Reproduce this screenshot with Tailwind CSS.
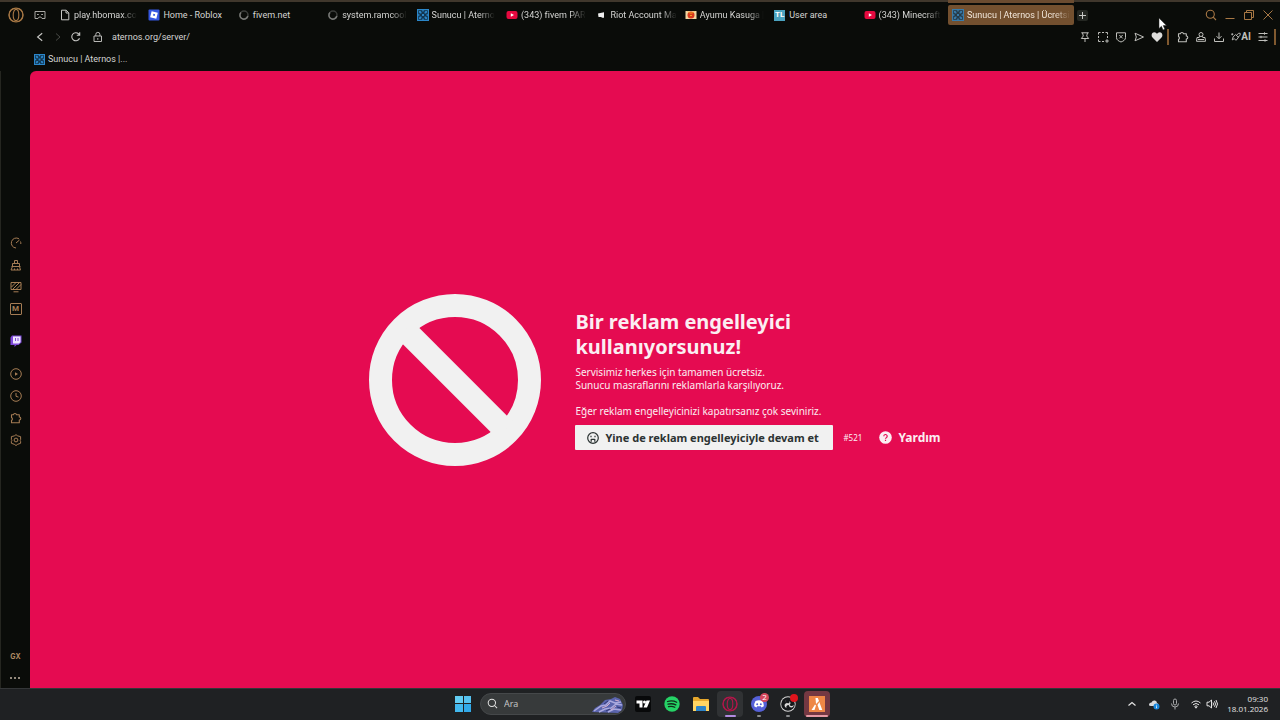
<!DOCTYPE html>
<html lang="tr">
<head>
<meta charset="utf-8">
<meta name="viewport" content="width=device-width, initial-scale=1">
<title>Sunucu | Aternos | Ücretsiz Minecraft sunucusu</title>
<script src="https://cdn.jsdelivr.net/npm/@tailwindcss/browser@4"></script>
</head>
<body class="flex h-screen flex-col overflow-hidden bg-[#0a0c09] font-['Roboto',sans-serif] text-[9px] leading-3 text-[#d5d5d3]">

<svg class="hidden" aria-hidden="true">
  <symbol id="aternos" viewBox="0 0 12 12"><rect width="12" height="12" fill="#2b86c8"/><rect x="1.200" y="1.200" width="9.600" height="9.600" fill="#12354f"/><path d="M2 2h1.500l1 1v1.500H3l-1-1zM10 2H8.500l-1 1v1.500H9l1-1zM2 10h1.500l1-1V7.500H3l-1 1zM10 10H8.500l-1-1V7.500H9l1 1zM5 5h2v2H5zM5.300 1h1.400v1.500H5.300zM5.300 9.500h1.400V11H5.300zM1 5.300h1.500v1.400H1zM9.500 5.300H11v1.400H9.500z" fill="#2b86c8"/></symbol>
  <symbol id="youtube" viewBox="0 0 12 12"><rect x=".5" y="2" width="11" height="8" rx="2" fill="#e5093f"/><path d="M4.800 4.200v3.600L8 6z" fill="#fff"/></symbol>
  <symbol id="loading" viewBox="0 0 12 12"><circle cx="6" cy="6" r="4" fill="none" stroke="#3c3e3b" stroke-width="1.500"/><path d="M3 3.400A4 4 0 1 0 9.800 7" fill="none" stroke="#777875" stroke-width="1.500"/></symbol>
  <symbol id="puzzle" viewBox="0 0 12 12"><path d="M1.500 2.800H3.300a1.700 1.700 0 0 1 3.300 0H9.300V5a1.500 1.500 0 0 1 0 3v2.700H1.500V8.500a1.700 1.700 0 0 0 0-3z" fill="none" stroke="currentColor" stroke-width="1.100" stroke-linejoin="round"/></symbol>
  <symbol id="opera" viewBox="0 0 16 16"><g fill="none" stroke="currentColor" stroke-width="1.100"><circle cx="8" cy="8" r="6.900"/><ellipse cx="8" cy="8" rx="2.800" ry="5.600"/><path d="M6.300 1.500a5.300 6.500 0 0 0 0 13M9.700 1.500a5.300 6.500 0 0 1 0 13"/></g></symbol>
  <symbol id="search" viewBox="0 0 12 12"><g fill="none" stroke="currentColor" stroke-width="1.100"><circle cx="5.300" cy="5.300" r="4"/><path d="m8.200 8.200 2.800 2.800"/></g></symbol>
</svg>

<header class="relative shrink-0 border-t-2 border-[#40372c] pt-px">
  <div class="flex h-6 items-center">
    <button class="ml-2 size-4 text-[#a87845]" aria-label="Opera menüsü"><svg class="size-4"><use href="#opera"/></svg></button>
    <button class="ml-[10px] size-3" aria-label="Çalışma alanı"><svg class="size-3" viewBox="0 0 12 12" fill="none" stroke="#aaa9a5"><path d="M1 2.500h10v7H8L6.800 8H5.200L4 9.500H1z"/><path d="M3 5.500h1.800M7.200 5.500H9"/></svg></button>
    <nav class="ml-[9px] grid w-[894px] shrink grid-cols-10" aria-label="Sekmeler">
      <a href="#" class="flex h-5 min-w-0 items-center gap-[3px] pl-1"><svg class="size-3 shrink-0" viewBox="0 0 12 12" fill="none" stroke="#c8c8c5"><path d="M2.500 1.200h4.700l2.600 2.600v7H2.500zM7 1.500V4h2.500"/></svg><span class="whitespace-nowrap [mask-image:linear-gradient(to_right,black_75%,transparent)]">play.hbomax.co</span></a>
      <a href="#" class="flex h-5 min-w-0 items-center gap-[3px] pl-1"><svg class="size-3 shrink-0" viewBox="0 0 12 12"><rect x=".5" y=".5" width="11" height="11" rx="1" fill="#3556e0"/><path d="m3.600 2.200 6.200 1.600-1.500 6-6.200-1.600z" fill="#fff"/><path d="m5.400 4.800 1.700.4-.4 1.700L5 6.500z" fill="#3556e0"/></svg><span class="whitespace-nowrap">Home - Roblox</span></a>
      <a href="#" class="flex h-5 min-w-0 items-center gap-[3px] pl-1"><svg class="size-3 shrink-0"><use href="#loading"/></svg><span>fivem.net</span></a>
      <a href="#" class="flex h-5 min-w-0 items-center gap-[3px] pl-1"><svg class="size-3 shrink-0"><use href="#loading"/></svg><span class="whitespace-nowrap [mask-image:linear-gradient(to_right,black_75%,transparent)]">system.ramcool</span></a>
      <a href="#" class="flex h-5 min-w-0 items-center gap-[3px] pl-1"><svg class="size-3 shrink-0"><use href="#aternos"/></svg><span class="whitespace-nowrap [mask-image:linear-gradient(to_right,black_75%,transparent)]">Sunucu | Aterno</span></a>
      <a href="#" class="flex h-5 min-w-0 items-center gap-[3px] pl-1"><svg class="size-3 shrink-0"><use href="#youtube"/></svg><span class="whitespace-nowrap [mask-image:linear-gradient(to_right,black_75%,transparent)]">(343) fivem PAR</span></a>
      <a href="#" class="flex h-5 min-w-0 items-center gap-[3px] pl-1"><svg class="size-3 shrink-0" viewBox="0 0 12 12"><path d="M3 4.500 9 3.300v5.500H7.300L6 8H3.500z" fill="#eee"/></svg><span class="whitespace-nowrap [mask-image:linear-gradient(to_right,black_75%,transparent)]">Riot Account Ma</span></a>
      <a href="#" class="flex h-5 min-w-0 items-center gap-[3px] pl-1"><svg class="size-3 shrink-0" viewBox="0 0 12 12"><rect x=".5" y="2" width="11" height="8" fill="#f2d5a0"/><circle cx="6" cy="6" r="3.500" fill="#d8381c"/><path d="M3 2.500 4.500 4h3L9 2.500M5 6.500h2" stroke="#f0a020" fill="none"/></svg><span class="whitespace-nowrap [mask-image:linear-gradient(to_right,black_75%,transparent)]">Ayumu Kasuga |</span></a>
      <a href="#" class="flex h-5 min-w-0 items-center gap-[3px] pl-1"><span class="grid size-[11px] shrink-0 place-items-center bg-[#4ba3c0] text-[8px] font-bold leading-none text-white">TL</span><span class="ml-px whitespace-nowrap">User area</span></a>
      <a href="#" class="flex h-5 min-w-0 items-center gap-[3px] pl-1"><svg class="size-3 shrink-0"><use href="#youtube"/></svg><span class="whitespace-nowrap [mask-image:linear-gradient(to_right,black_75%,transparent)]">(343) Minecraft</span></a>
    </nav>
    <a href="#" aria-current="page" class="relative -ml-px flex h-5 w-[126px] shrink-0 items-center gap-[3px] rounded-xs bg-[#73502f] pl-1 text-[#f1e6da]"><span class="absolute inset-x-0 -top-[5px] h-[3px] bg-[#6a4b30]"></span><svg class="size-3 shrink-0 opacity-80"><use href="#aternos"/></svg><span class="whitespace-nowrap [mask-image:linear-gradient(to_right,black_85%,transparent)]">Sunucu | Aternos | Ücretsi</span></a>
    <button class="ml-[3px] grid size-[11px] place-items-center rounded-xs bg-[#242722]" aria-label="Yeni sekme"><svg class="size-[9px]" viewBox="0 0 9 9" stroke="#c8c8c5"><path d="M4.500 1v7M1 4.500h7"/></svg></button>
    <div class="ml-auto mr-[6px] flex items-center gap-[7px] text-[#a87845]">
      <button class="size-3" aria-label="Sekmelerde ara"><svg class="size-3"><use href="#search"/></svg></button>
      <button class="size-3" aria-label="Küçült"><svg class="size-3" viewBox="0 0 12 12" stroke="currentColor"><path d="M1.500 9.500h9"/></svg></button>
      <button class="size-3" aria-label="Geri yükle"><svg class="size-3" viewBox="0 0 12 12" fill="none" stroke="currentColor"><path d="M1.500 3.500h7v7h-7zM3.500 3.500v-2h7v7h-2"/></svg></button>
      <button class="size-3" aria-label="Kapat"><svg class="size-3" viewBox="0 0 12 12" stroke="currentColor"><path d="m1.500 1.500 9 9m0-9-9 9"/></svg></button>
    </div>
  </div>

  <div class="flex h-5 items-center pl-[34px]">
    <button class="size-3" aria-label="Geri"><svg class="size-3" viewBox="0 0 12 12" fill="none" stroke="#c8c8c5" stroke-width="1.100"><path d="m8.200 2.300-4.600 3.700 4.600 3.700"/></svg></button>
    <button class="ml-[6px] size-3" aria-label="İleri" disabled><svg class="size-3" viewBox="0 0 12 12" fill="none" stroke="#484a46"><path d="m4 2.500 4 3.500-4 3.500"/></svg></button>
    <button class="ml-[6px] size-3" aria-label="Yenile"><svg class="size-3" viewBox="0 0 12 12" fill="none" stroke="#c8c8c5" stroke-width="1.100"><path d="M9.500 7.200A4 4 0 1 1 8.700 3L9.500 4M9.700 1.200v3H6.800"/></svg></button>
    <button class="ml-[10px] size-3" aria-label="Site bilgileri"><svg class="size-3" viewBox="0 0 12 12" fill="none" stroke="#b8b8b5"><path d="M2 5h7.500v5.500H2zM3.800 5V3.400a2 2 0 0 1 4.100 0V5M5.800 7v1.800"/></svg></button>
    <input class="ml-2 w-0 grow bg-transparent text-[9px] leading-3 outline-none" aria-label="Adres" value="aternos.org/server/">
    <div class="mr-1 flex items-center gap-[6px] text-[#c0c0bc]">
      <button class="size-3" aria-label="Sabitle"><svg class="size-3" viewBox="0 0 12 12" fill="none" stroke="currentColor"><path d="M2.300 1.800h7.400M3.500 1.800 4.300 5 2.300 7.500h7.400L7.700 5l.8-3.200M6 7.500V11"/></svg></button>
      <button class="size-3" aria-label="Anlık görüntü"><svg class="size-3" viewBox="0 0 12 12" fill="none" stroke="currentColor"><path d="M1.500 3.500v-2h2M5 1.500h2M8.500 1.500h2v2M10.500 5v2M1.500 5v2M1.500 8.500v2h2M5 10.500h2M10 8.200v3.600M8.200 10h3.600"/></svg></button>
      <button class="size-3" aria-label="Reklam engelleyici"><svg class="size-3" viewBox="0 0 12 12" fill="none" stroke="currentColor"><path d="M1.500 1.800h9V6.500c0 2.500-2 3.500-4.500 4.500-2.500-1-4.500-2-4.500-4.500zM4.300 4l3.400 3.400M7.700 4 4.300 7.400"/></svg></button>
      <button class="size-3" aria-label="Flow"><svg class="size-3" viewBox="0 0 12 12" fill="none" stroke="currentColor"><path d="M2 2.200 10.500 6 2 9.800 3.300 6z" stroke-linejoin="round"/></svg></button>
      <button class="size-3" aria-label="Favorilere ekle"><svg class="size-3" viewBox="0 0 12 12"><path d="M6 11 1.500 6.500C-.5 4 1.200 1.300 3.300 1.300 4.500 1.300 5.500 2 6 3c.5-1 1.500-1.700 2.700-1.700 2.100 0 3.800 2.700 1.800 5.200z" fill="#dededb"/></svg></button>
      <span class="-mx-[2px] h-4 w-[2px] bg-[#80592f]"></span>
      <button class="ml-1 size-3" aria-label="Uzantılar"><svg class="size-3"><use href="#puzzle"/></svg></button>
      <button class="size-3" aria-label="Profil"><svg class="size-3" viewBox="0 0 12 12" fill="none" stroke="currentColor"><circle cx="6" cy="3.500" r="2"/><path d="M4.500 5.200 4.200 6.500H2L1.500 10.300h9L10 6.500H7.800L7.500 5.200M3 8.500h6"/></svg></button>
      <button class="size-3" aria-label="İndirilenler"><svg class="size-3" viewBox="0 0 12 12" fill="none" stroke="currentColor"><path d="M6 1.500v6M3.500 5.200 6 7.700l2.500-2.500M1.500 7.500v3h9v-3"/></svg></button>
      <button class="flex h-3 items-center text-[10px] font-bold leading-3" aria-label="Opera AI"><svg class="size-[10px]" viewBox="0 0 12 12" fill="none" stroke="currentColor" stroke-width="1.100"><path d="M5.500 3 9 6.500 6 10 4 8 1.500 9.500 2.500 6zM6.500 4.200 9 1.500h2V4L8 6.500M1.500 4V1.500M.3 2.700h2.500"/></svg>AI</button>
      <button class="size-3" aria-label="Kolay kurulum"><svg class="size-3" viewBox="0 0 12 12" fill="none" stroke="currentColor"><path d="M1.500 2.500h9M1.500 6h9M1.500 9.500h9M7.500 1.300v2.400M4 4.800v2.400M8 8.300v2.400"/></svg></button>
      <span class="-ml-px h-4 w-[2px] bg-[#80592f]"></span>
    </div>
  </div>

  <nav class="flex h-6 items-center pl-[34px]" aria-label="Yer imleri">
    <a href="#" class="flex items-center gap-[3px]"><svg class="size-[11px]"><use href="#aternos"/></svg>Sunucu | Aternos |...</a>
  </nav>
  <svg class="absolute left-[1158px] top-[15px] h-[14px] w-[9px]" viewBox="0 0 9 14" aria-hidden="true"><path d="M1 1v10.500l2.400-2.200 1.700 3.600 1.700-.8-1.600-3.500H8.500z" fill="#fff" stroke="#222" stroke-width=".5"/></svg>
</header>

<div class="flex min-h-0 grow">
  <aside class="flex w-[30px] shrink-0 flex-col items-center border-l border-[#252620] pt-[166px] text-[#a57c54]">
    <div class="flex flex-col gap-[10px]">
      <button class="size-3" aria-label="GX Control"><svg class="size-3" viewBox="0 0 12 12" fill="none" stroke="currentColor"><path d="M9 1.800A5 5 0 1 0 6 11M6 6l3.500-3M10.500 4.500a5 5 0 0 1 .3 2.500"/></svg></button>
      <button class="size-3" aria-label="GX Cleaner"><svg class="size-3" viewBox="0 0 12 12" fill="none" stroke="currentColor"><path d="M4.500 4.500V1.500h3v3M2.500 7.500v-3h7v3M1.500 7.500h9M2.500 7.500 1 11h9.500L9.500 7.500M4.500 11V9.500M7.500 11V9.500"/></svg></button>
      <button class="size-3" aria-label="Duvar kağıdı"><svg class="size-3" viewBox="0 0 12 12" fill="none" stroke="currentColor"><path d="M1 1.500h10v7H1zM1.500 6 6 1.500M2.500 8.500l7-7M6 8.500 11 3.500M3.500 10.800h5"/></svg></button>
      <button class="grid size-3 place-items-center rounded-[1px] border border-current text-[8px] font-bold leading-none" aria-label="Modlar">M</button>
    </div>
    <button class="mt-[20px] size-3" aria-label="Twitch"><svg class="size-3" viewBox="0 0 12 12"><path d="M2 .5h9.500v7L8.500 10H6.500L4.500 12v-2H.5V2.500z" fill="#7d48d8"/><path d="M3 1.500h7.500V7L9 8.500H3z" fill="#eee5ff"/><path d="M5.500 3v3M8 3v3" stroke="#7d48d8"/></svg></button>
    <div class="mt-[21px] flex flex-col gap-[10px]">
      <button class="size-3" aria-label="Oynatıcı"><svg class="size-3" viewBox="0 0 12 12" fill="none" stroke="currentColor"><circle cx="6" cy="6" r="5.300"/><path d="M5 4.200v3.600L8 6z" fill="currentColor" stroke="none"/></svg></button>
      <button class="size-3" aria-label="Geçmiş"><svg class="size-3" viewBox="0 0 12 12" fill="none" stroke="currentColor"><circle cx="6" cy="6" r="5.300"/><path d="M6 3v3.300l2.500.8"/></svg></button>
      <button class="size-3" aria-label="Uzantılar"><svg class="size-3"><use href="#puzzle"/></svg></button>
      <button class="size-3" aria-label="Ayarlar"><svg class="size-3" viewBox="0 0 12 12" fill="none" stroke="currentColor"><path d="m6 .7 1.700 1.200 2.900.7v3.100l-.4.8.4.8v2l-2.900 1L6 11.500l-1.700-1.200-2.900-1v-2l.4-.8-.4-.8V2.600l2.900-.7z"/><circle cx="6" cy="6" r="1.900"/></svg></button>
    </div>
    <div class="mb-[6px] mt-auto flex flex-col items-center gap-3">
      <button class="font-['Inter',sans-serif] text-[7px] font-bold leading-[10px] text-[#b08b63]">GX</button>
      <button class="flex h-2 items-center gap-[2px]" aria-label="Diğer"><i class="size-[2px] rounded-full bg-[#c3b5a5]"></i><i class="size-[2px] rounded-full bg-[#c3b5a5]"></i><i class="size-[2px] rounded-full bg-[#c3b5a5]"></i></button>
    </div>
  </aside>

  <main class="flex grow items-center justify-center rounded-tl-md bg-[#e50b51] font-['Noto_Sans',sans-serif] text-[#fbeef2]">
    <div class="flex items-center gap-[34px]">
      <svg class="size-[172px] shrink-0" viewBox="0 0 172 172" fill="none" stroke="#f1f1f1" role="img" aria-label="Yasak"><circle cx="86" cy="86" r="74.500" stroke-width="23"/><path d="m36 36 100 100" stroke-width="23"/></svg>
      <div>
        <h1 class="text-[20px] font-bold leading-[25px]">Bir reklam engelleyici<br>kullanıyorsunuz!</h1>
        <p class="mt-[7px] text-[10px] leading-[13px]">Servisimiz herkes için tamamen ücretsiz.<br>Sunucu masraflarını reklamlarla karşılıyoruz.<br><br>Eğer reklam engelleyicinizi kapatırsanız çok seviniriz.</p>
        <div class="mt-[7px] flex items-center">
          <button class="flex h-[25px] w-[258px] items-center gap-[6px] whitespace-nowrap rounded-[1px] bg-[#f1f1f1] pl-3 text-[11px] font-bold text-[#2c3333]"><svg class="size-3 shrink-0" viewBox="0 0 12 12" fill="none" stroke="currentColor" stroke-width="1.200"><circle cx="6" cy="6" r="5.300"/><path d="M4 3.800v1.500M8 3.800v1.500M4.200 7v2.800M7.800 7v2.800M4.200 7.400h3.600"/></svg>Yine de reklam engelleyiciyle devam et</button>
          <span class="ml-[10px] w-[36px] text-[8px]">#521</span>
          <a href="#" class="flex items-center gap-[6px] text-[12px] font-bold"><svg class="size-[13px]" viewBox="0 0 13 13"><circle cx="6.500" cy="6.500" r="6.300" fill="#fbeef2"/><path d="M4.800 5.200a1.700 1.700 0 1 1 2.500 1.500q-.8.400-.8 1.100M6.500 8.800v1.300" fill="none" stroke="#e50b51" stroke-width="1.200"/></svg>Yardım</a>
        </div>
      </div>
    </div>
  </main>
</div>

<footer class="grid h-8 shrink-0 grid-cols-[1fr_auto_1fr] items-center border-t border-[#343638] bg-[#1f2123] pb-[2px] font-['Open_Sans',sans-serif] text-[#e4e4e4]">
  <span></span>
  <div class="flex items-center pl-[5px]">
    <button class="mr-[9px] grid size-4 grid-cols-2 gap-px" aria-label="Başlat"><i class="size-full bg-[#62cdf3]"></i><i class="size-full bg-[#55c2f0]"></i><i class="size-full bg-[#42b8ee]"></i><i class="size-full bg-[#31a9e9]"></i></button>
    <label class="flex h-[22px] w-[146px] items-center overflow-hidden rounded-full border border-[#45484a] bg-[#373a3b] pl-[6px]"><svg class="size-[11px] shrink-0"><use href="#search"/></svg><input class="ml-[6px] w-0 grow bg-transparent text-[9px] outline-none placeholder:text-[#c9c9c9]" placeholder="Ara" aria-label="Ara"><svg class="h-5 w-[34px] shrink-0" viewBox="0 0 34 20" aria-hidden="true"><path d="M1 18 4 14l5-3 5-5 6-1 4-2 5 2 3 6-1 5-4 3z" fill="#5a64ad"/><path d="m3 17 7-5 5-1 4-4 5 2 6-1M8 18l6-3 6-1 5-4 6 1M17 18l6-3 7 1" fill="none" stroke="#aaa9de" stroke-width="1.500"/><path d="m11 14 5-2 3-3M20 16l5-4M24 6l4 1" fill="none" stroke="#d6aecb"/><path d="m13 10 4-3M15 17l4-2M26 13l4 1" fill="none" stroke="#303775"/></svg></label>
    <div class="ml-[4px] flex items-center gap-[3px]">
      <button class="grid size-[26px] place-items-center" aria-label="TradingView"><svg class="size-4" viewBox="0 0 16 16"><rect width="16" height="16" rx="2" fill="#08090a"/><path d="M1.500 4.500h6v7h-3v-4h-3zM11.500 4.500h3.500l-3 7H8.500z" fill="#fff"/><circle cx="9.500" cy="6" r="1.500" fill="#fff"/></svg></button>
      <button class="grid size-[26px] place-items-center" aria-label="Spotify"><svg class="size-4" viewBox="0 0 16 16" fill="none"><circle cx="8" cy="8" r="7.700" fill="#25d366"/><path d="M3.500 5.500q5-1.500 9.200.8M4 8.200q4-1.200 7.800.7M4.500 10.700q3.500-.9 6.300.6" stroke="#102b19" stroke-width="1.300" stroke-linecap="round"/></svg></button>
      <button class="grid size-[26px] place-items-center" aria-label="Dosya Gezgini"><svg class="h-4 w-[18px]" viewBox="0 0 18 16"><path d="M1 2q0-1 1-1h4l2 2h8q1 0 1 1v10H1z" fill="#e6a72c"/><path d="M1 5h16v10H1z" fill="#ffd563"/><path d="M4 15v-4q0-1 1-1h8q1 0 1 1v4z" fill="#2c83c8"/></svg></button>
      <button class="relative grid size-[26px] place-items-center rounded-sm bg-[#303234] text-[#b3164a]" aria-label="Opera GX"><svg class="size-4"><use href="#opera"/></svg><i class="absolute bottom-0 h-[2px] w-[11px] rounded-full bg-[#b28be0]"></i></button>
      <button class="relative grid size-[26px] place-items-center" aria-label="Discord"><svg class="size-4" viewBox="0 0 16 16"><circle cx="8" cy="8" r="8" fill="#5560d8"/><path d="M4.500 5q3.500-1.300 7 0 1.500 2.500 1.300 5.300l-2.200 1.200-.8-1.200H6.200l-.8 1.200-2.200-1.200Q3 7.500 4.500 5z" fill="#fff"/><circle cx="6.200" cy="8.300" r="1" fill="#5560d8"/><circle cx="9.800" cy="8.300" r="1" fill="#5560d8"/></svg><b class="absolute right-[3px] top-[2px] grid size-[9px] place-items-center rounded-full bg-[#d6475c] text-[8px] font-normal leading-none text-white">2</b><i class="absolute bottom-0 h-[2px] w-[4px] rounded-full bg-[#8c8e90]"></i></button>
      <button class="relative grid size-[26px] place-items-center" aria-label="OBS"><svg class="size-[18px]" viewBox="0 0 18 18"><circle cx="9" cy="9" r="7.700" fill="#d8d8d8" /><circle cx="9" cy="9" r="6.800" fill="#15171a"/><path d="M8.500 3.500q-2.500 1.500-1.500 3.500 1 1.700 3.200 1 .5-1 .2-2 2 2 .2 4 1 1.500 3 .8 1-.4 1.200-1.300-.2 3-2.500 3-2 0-2.700-2.500-1.800-.2-2.300 1.500-.3 1 .7 1.800-2.800-1-2.500-3.200.4-1.700 2.300-2Q5.700 5 8.500 3.500z" fill="#d8d8d8"/></svg><i class="absolute right-[3px] top-[3px] size-2 rounded-full bg-[#e0141c]"></i><i class="absolute bottom-0 h-[2px] w-[4px] rounded-full bg-[#8c8e90]"></i></button>
      <button class="relative grid size-[26px] place-items-center rounded-sm bg-[#743842]" aria-label="FiveM"><svg class="size-4" viewBox="0 0 16 16"><rect width="16" height="16" fill="#ee8746"/><path d="M6.500 2h2.300L10 5 7 8zM10.300 6l3 8h-3L8.500 9zM6 8.500 7 9.500 5.500 14h-3z" fill="#fff"/></svg><i class="absolute bottom-0 h-[2px] w-[22px] rounded-full bg-[#e79aa5]"></i></button>
    </div>
  </div>
  <div class="flex items-center justify-end pr-3">
    <button class="size-[10px]" aria-label="Gizli simgeler"><svg class="size-[10px]" viewBox="0 0 10 10" fill="none" stroke="currentColor" stroke-width="1.200"><path d="M1.500 6.500 5 3.500l3.500 3"/></svg></button>
    <button class="ml-[11px] size-3" aria-label="OneDrive"><svg class="size-3" viewBox="0 0 12 12"><path d="M1 7q0-2.500 2.500-2.500Q4.500 2 7 2.500q2 .5 2 2.500 2 .5 1.500 3H3Q1 8 1 7z" fill="#d7d9db"/><circle cx="8.500" cy="8.500" r="3" fill="#1787dc"/><path d="M8.500 6.800v.8M8.500 8.200v2" stroke="#fff" stroke-width=".8"/></svg></button>
    <button class="ml-[9px] size-3" aria-label="Mikrofon"><svg class="size-3" viewBox="0 0 12 12" fill="none" stroke="#a8a9aa"><rect x="4.500" y="1" width="3" height="6" rx="1.500"/><path d="M2.500 5.500q0 3.500 3.500 3.500t3.500-3.500M6 9v2.500"/></svg></button>
    <button class="ml-[9px] flex items-center gap-1" aria-label="Ağ ve ses"><svg class="size-3" viewBox="0 0 12 12" fill="none" stroke="currentColor"><path d="M1.500 5q4.500-4 9 0M3 6.800q3-2.700 6 0M4.500 8.500q1.500-1.300 3 0"/><circle cx="6" cy="9.500" r=".6" fill="currentColor"/></svg><svg class="size-3" viewBox="0 0 12 12" fill="none" stroke="currentColor"><path d="M1 4.200h2L5.500 2v8L3 7.800H1zM7 4.500q1 1.500 0 3M8.500 3.200q2 2.800 0 5.600M10 2q3 4 0 8"/></svg></button>
    <button class="ml-[9px] text-right text-[8px] leading-[10px]">09:30<br>18.01.2026</button>
  </div>
</footer>
</body>
</html>
